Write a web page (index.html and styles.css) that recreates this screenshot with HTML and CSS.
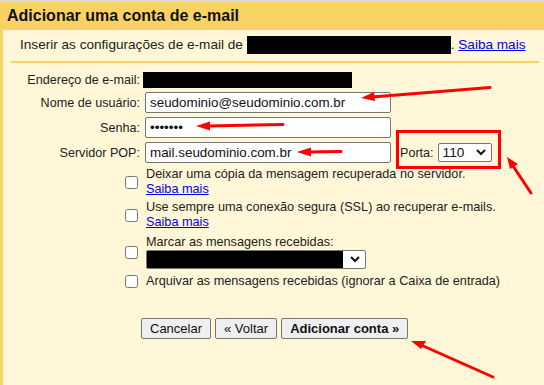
FILE: index.html
```html
<!DOCTYPE html>
<html lang="pt-BR">
<head>
<meta charset="UTF-8" />
<title>Adicionar uma conta de e-mail</title>
<link rel="stylesheet" href="styles.css">
</head>
<body>
<div class="topline"></div>
<header class="header">
<h1>Adicionar uma conta de e-mail</h1>
</header>

<main class="panel">
<div class="intro">
Inserir as configurações de e-mail de <span class="redact redact-intro"></span>. <a href="#">Saiba mais</a>
</div>

<form class="fields">
<label class="lbl">Endereço de e-mail:</label>
<div class="val"><span class="redact redact-addr"></span></div>

<label class="lbl" for="user">Nome de usuário:</label>
<div class="val"><input type="text" id="user" class="txt" value="seudominio@seudominio.com.br" /></div>

<label class="lbl" for="pass">Senha:</label>
<div class="val"><input type="password" id="pass" class="txt" value="1234567" /></div>

<label class="lbl" for="pop">Servidor POP:</label>
<div class="val pop-row">
<input type="text" id="pop" class="txt" value="mail.seudominio.com.br" />
<span class="port-label">Porta:</span>
<div class="fake-select port-select">
<span class="port-value">110</span>
<svg class="chev" width="10" height="7" viewBox="0 0 10 7"><polyline points="1,1 5,5 9,1" fill="none" stroke="#111" stroke-width="2"/></svg>
</div>
</div>
</form>

<div class="options">
<div class="opt">
<input type="checkbox" class="chk" />
<div class="opt-text">Deixar uma cópia da mensagem recuperada no servidor.<br><a href="#">Saiba mais</a></div>
</div>
<div class="opt">
<input type="checkbox" class="chk" />
<div class="opt-text">Use sempre uma conexão segura (SSL) ao recuperar e-mails.<br><a href="#">Saiba mais</a></div>
</div>
<div class="opt opt-label">
<input type="checkbox" class="chk" />
<div class="opt-text">Marcar as mensagens recebidas:
<div class="fake-select label-select">
<span class="redact redact-select"></span>
<svg class="chev" width="10" height="7" viewBox="0 0 10 7"><polyline points="1,1 5,5 9,1" fill="none" stroke="#111" stroke-width="2"/></svg>
</div>
</div>
</div>
<div class="opt">
<input type="checkbox" class="chk" />
<div class="opt-text">Arquivar as mensagens recebidas (ignorar a Caixa de entrada)</div>
</div>
</div>

<div class="actions">
<button class="btn">Cancelar</button>
<button class="btn">« Voltar</button>
<button class="btn btn-main">Adicionar conta »</button>
</div>
</main>

<!-- annotation arrows drawn over the screenshot -->
<svg class="marks" width="544" height="385" viewBox="0 0 544 385">
<g stroke="#f00" stroke-width="3" fill="none" stroke-linecap="round">
<line x1="490" y1="87.5" x2="372" y2="97" />
<line x1="283" y1="124.5" x2="208" y2="126" />
<line x1="341" y1="151.5" x2="308" y2="152" />
<line x1="531" y1="193" x2="513" y2="166" />
<line x1="493" y1="377" x2="421" y2="345" />
<rect x="397.5" y="131.5" width="102" height="36" stroke-linecap="butt" />
</g>
<g fill="#f00">
<polygon points="361,98 374,92 375,101" />
<polygon points="196,126 210,121.5 210,130.5" />
<polygon points="297,152 311,147.5 311,156.5" />
<polygon points="507,157 518,164 510,169" />
<polygon points="411,341 426,341 421,349" />
</g>
</svg>
</body>
</html>
```

FILE: styles.css
```css
body {
margin: 0;
width: 544px;
height: 385px;
overflow: hidden;
position: relative;
font-family: "Liberation Sans", Arial, sans-serif;
font-size: 13px;
color: #222;
background-color: #fff7d7;
}

a {
color: #0000ee;
}

.topline {
height: 2px;
background-color: #d9d9d9;
}

/* Yellow title bar */
.header {
height: 28px;
display: flex;
align-items: center;
padding-left: 7px;
background-color: #fad163;
}

.header h1 {
margin: 0;
font-size: 16px;
font-weight: bold;
color: #111;
}

.panel {
border-left: 3px solid #fad163;
height: 355px;
box-sizing: border-box;
}

.intro {
margin: 0 5px 0 8px;
padding: 6px 0 7px 9px;
line-height: 18px;
font-size: 13.6px;
border-bottom: 2px solid #fad163;
}

.redact {
display: inline-block;
background-color: #000;
vertical-align: middle;
}

.redact-intro {
width: 204px;
height: 18px;
vertical-align: top;
}

.redact-addr {
width: 209px;
height: 16px;
margin-left: -2px;
}

/* Label / field grid */
.fields {
display: grid;
grid-template-columns: 137px auto;
column-gap: 5px;
row-gap: 4px;
padding-top: 9px;
margin: 0;
font-size: 12.6px;
}

.lbl {
text-align: right;
align-self: center;
}

.val {
display: flex;
align-items: center;
}

.txt {
width: 246px;
height: 21px;
box-sizing: border-box;
margin: 0;
padding: 1px 4px;
border: 1px solid #767676;
border-radius: 2px;
font-family: "Liberation Sans", Arial, sans-serif;
font-size: 13.4px;
color: #111;
background-color: #fff;
}

.port-label {
margin-left: 9px;
margin-right: 4px;
}

.fake-select {
display: flex;
align-items: center;
box-sizing: border-box;
border: 1px solid #767676;
border-radius: 2px;
background-color: #fff;
}

.port-select {
width: 54px;
height: 19px;
padding: 0 5px 0 4px;
justify-content: space-between;
color: #111;
font-size: 13.6px;
}

.chev {
display: block;
}

/* Checkbox options */
.options {
padding: 4px 0 0 122px;
display: flex;
flex-direction: column;
gap: 3px;
font-size: 12.7px;
}

.opt {
display: flex;
align-items: center;
}

.chk {
width: 13px;
height: 13px;
margin: 0 8px 0 0;
}

.opt-text {
line-height: 15px;
}

.opt-label {
margin-top: 2px;
}

.label-select {
width: 220px;
height: 19px;
padding-right: 5px;
}

.redact-select {
flex: 1;
height: 17px;
margin-right: 7px;
}

.opt-label + .opt {
margin-top: 2px;
}

/* Bottom buttons */
.actions {
display: flex;
gap: 4px;
padding: 29px 0 0 138px;
}

.btn {
height: 21px;
padding: 0 8px;
border: 1px solid #767676;
border-radius: 2px;
background-color: #efefef;
font-family: "Liberation Sans", Arial, sans-serif;
font-size: 13px;
color: #111;
}

.btn-main {
font-weight: bold;
}

.marks {
position: absolute;
top: 0;
left: 0;
pointer-events: none;
}
```
